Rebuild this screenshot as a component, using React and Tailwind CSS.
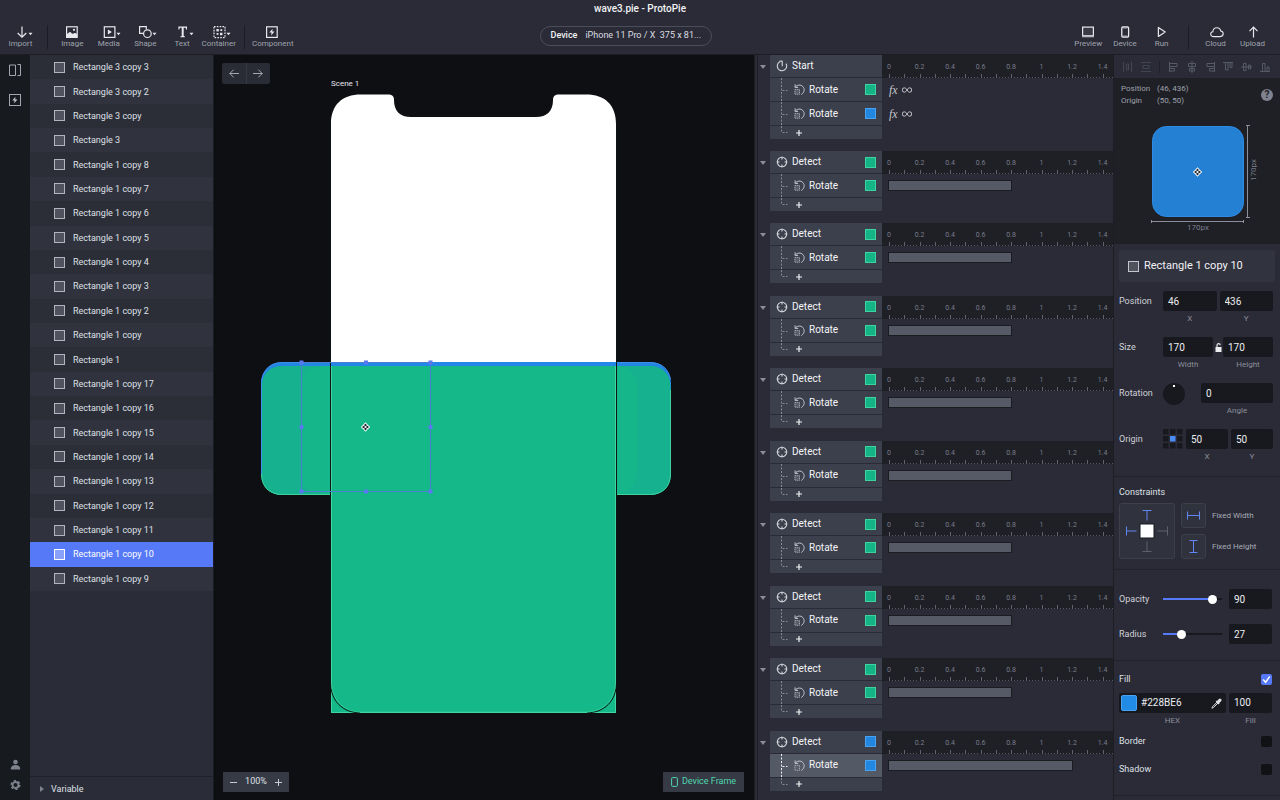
import React from "react";

const layers = [
  "Rectangle 3 copy 3",
  "Rectangle 3 copy 2",
  "Rectangle 3 copy",
  "Rectangle 3",
  "Rectangle 1 copy 8",
  "Rectangle 1 copy 7",
  "Rectangle 1 copy 6",
  "Rectangle 1 copy 5",
  "Rectangle 1 copy 4",
  "Rectangle 1 copy 3",
  "Rectangle 1 copy 2",
  "Rectangle 1 copy",
  "Rectangle 1",
  "Rectangle 1 copy 17",
  "Rectangle 1 copy 16",
  "Rectangle 1 copy 15",
  "Rectangle 1 copy 14",
  "Rectangle 1 copy 13",
  "Rectangle 1 copy 12",
  "Rectangle 1 copy 11",
  "Rectangle 1 copy 10",
  "Rectangle 1 copy 9",
];
const selectedLayer = "Rectangle 1 copy 10";

const detectGroups = [
  { color: "green", end: 0.8 },
  { color: "green", end: 0.8 },
  { color: "green", end: 0.8 },
  { color: "green", end: 0.8 },
  { color: "green", end: 0.8 },
  { color: "green", end: 0.8 },
  { color: "green", end: 0.8 },
  { color: "green", end: 0.8 },
  { color: "blue", end: 1.2, selected: true },
];

/* ---------- toolbar icons ---------- */

function Icon({ children, caret }) {
  return (
    <svg width="24" height="14" viewBox="0 0 24 14" fill="none" stroke="#e8e9ee" className="shrink-0">
      {children}
      {caret && <path d="M19.500 7.800h4l-2 2.400z" fill="#e8e9ee" stroke="none" />}
    </svg>
  );
}

const icons = {
  Import: (
    <Icon caret>
      <path d="M13 1.500v10.500M8.700 8l4.300 4.200L17.300 8" strokeWidth="1.200" />
    </Icon>
  ),
  Image: (
    <Icon>
      <rect x="6.600" y="1.800" width="10.600" height="10.600" strokeWidth="1.200" />
      <path d="M7 12V8.800c1.200 0 1.800-1.800 3-1.800s1.600 1.800 2.600 1.800 1.200-.8 2-.8 1 .6 2.400.8V12z" fill="#e8e9ee" stroke="none" />
      <circle cx="14" cy="4.800" r="1.100" fill="#e8e9ee" stroke="none" />
    </Icon>
  ),
  Media: (
    <Icon caret>
      <rect x="7.300" y="1.800" width="10.600" height="10.600" strokeWidth="1.200" />
      <path d="M10.900 4.600v5l4-2.500z" fill="#e8e9ee" stroke="none" />
    </Icon>
  ),
  Shape: (
    <Icon caret>
      <path d="M10.500 8.300H6.600V1.600h6.700v2.600" strokeWidth="1.200" />
      <circle cx="14.400" cy="8.700" r="3.800" strokeWidth="1.200" />
    </Icon>
  ),
  Text: (
    <Icon caret>
      <path
        d="M8.400 1.500h8.600v3h-.9l-.5-1.700h-1.900v8.200l1.300.4v.8h-4.600v-.8l1.300-.4V2.800H9.800l-.5 1.700h-.9z"
        fill="#e8e9ee"
        stroke="none"
      />
    </Icon>
  ),
  Container: (
    <Icon caret>
      <rect x="7" y="1.600" width="11" height="11" strokeWidth="1.200" strokeDasharray="1.600 1.200" />
      <rect x="9.400" y="4" width="2.400" height="2.400" fill="#e8e9ee" stroke="none" />
      <rect x="13.400" y="4.200" width="1.800" height="1.800" fill="#e8e9ee" stroke="none" />
      <rect x="9.600" y="8" width="1.800" height="1.800" fill="#e8e9ee" stroke="none" />
      <rect x="13" y="7.800" width="2.400" height="2.400" fill="#e8e9ee" stroke="none" />
    </Icon>
  ),
  Component: (
    <Icon>
      <rect x="5.600" y="1.800" width="10.600" height="10.600" strokeWidth="1.200" />
      <path d="M11.600 3.800 8.300 7.600h2.200l-.3 2.800 3.300-3.800h-2.200z" fill="#e8e9ee" stroke="none" />
    </Icon>
  ),
  Preview: (
    <Icon>
      <rect x="6.600" y="2.100" width="10.800" height="8.600" strokeWidth="1.200" fill="#3a3b46" />
      <path d="M6 11.400h12" strokeWidth="1.800" stroke="#b4b6bf" />
    </Icon>
  ),
  Device: (
    <Icon>
      <rect x="8.800" y="2" width="6.800" height="10" rx="1" strokeWidth="1.300" />
      <path d="M10 3h4.500M10 11h4.500" strokeWidth="1" stroke="#a4a6b0" />
    </Icon>
  ),
  Run: (
    <Icon>
      <path d="M8.400 2.400v9l6.800-4.500z" strokeWidth="1.200" strokeLinejoin="round" />
    </Icon>
  ),
  Cloud: (
    <Icon>
      <path
        d="M9.700 11.600c-1.900 0-3-1.100-3-2.500 0-1.300.9-2.300 2.200-2.400.1-2.400 1.900-4 4-4 2 0 3.500 1.400 3.800 3.300 1.500.2 2.500 1.200 2.500 2.600 0 1.700-1.200 3-3 3z"
        strokeWidth="1.100"
      />
    </Icon>
  ),
  Upload: (
    <Icon>
      <path d="M12.500 12.500V2.200M8.500 6.200l4-4 4 4" strokeWidth="1.200" />
    </Icon>
  ),
};

function Tool({ name }) {
  return (
    <button type="button" className="flex flex-col items-center pt-[7px]">
      {icons[name]}
      <span className="text-[8px] leading-[10px] text-[#9fa2ad]">{name}</span>
    </button>
  );
}

function ToolDivider() {
  return <span className="mt-[7px] h-6 w-px bg-[#1c1d24]" />;
}

function Header() {
  return (
    <header className="h-[55px] shrink-0 border-b border-[#1d1e25] bg-[#2a2b36]">
      <h1 className="h-[18px] text-center text-[10px] leading-[18px] font-medium text-[#f1f2f5]">
        wave3.pie - ProtoPie
      </h1>
      <div className="flex h-9">
        <div className="grid w-[41px]">
          <Tool name="Import" />
        </div>
        <div className="flex w-[13px] justify-center">
          <ToolDivider />
        </div>
        <div className="grid w-[183px] grid-cols-5">
          <Tool name="Image" />
          <Tool name="Media" />
          <Tool name="Shape" />
          <Tool name="Text" />
          <Tool name="Container" />
        </div>
        <div className="flex w-[15px] justify-center">
          <ToolDivider />
        </div>
        <div className="grid w-[39px]">
          <Tool name="Component" />
        </div>
        <div className="flex flex-1 items-start justify-center pt-2 pr-[110px]">
          <button
            type="button"
            className="flex h-5 w-[172px] items-center gap-2 rounded-full border border-[#4b4e5a] px-[10px] text-[9px] whitespace-nowrap text-[#dcdde3]"
          >
            <span className="font-medium text-[#f1f2f5]">Device</span>
            <span className="whitespace-pre">iPhone 11 Pro / X  375 x 81...</span>
          </button>
        </div>
        <div className="grid w-[110px] grid-cols-3">
          <Tool name="Preview" />
          <Tool name="Device" />
          <Tool name="Run" />
        </div>
        <div className="flex w-[17px] justify-center">
          <ToolDivider />
        </div>
        <div className="mr-[9px] grid w-[74px] grid-cols-2">
          <Tool name="Cloud" />
          <Tool name="Upload" />
        </div>
      </div>
    </header>
  );
}

/* ---------- left side ---------- */

function Rail() {
  return (
    <nav className="flex w-[30px] shrink-0 flex-col items-center justify-between bg-[#171a1f] pt-[9px] pb-[9px]">
      <div className="flex flex-col gap-[18px]">
        <button type="button" aria-label="Panels">
          <svg width="12" height="12" viewBox="0 0 12 12" fill="none" stroke="#a3a6ae">
            <path d="M.5 1h6v10.500h-6zM8.500.5h3v11h-3" />
          </svg>
        </button>
        <button type="button" aria-label="Components">
          <svg width="12" height="12" viewBox="0 0 12 12" fill="none" stroke="#a3a6ae">
            <rect x=".5" y=".5" width="11" height="11" />
            <path d="M6.400 2.800 3.300 6.400h2.100L5.200 9.200l3.300-3.700H6.300z" fill="#c0c2c9" stroke="none" />
          </svg>
        </button>
      </div>
      <div className="flex flex-col gap-2">
        <button type="button" aria-label="Account">
          <svg width="12" height="12" viewBox="0 0 12 12" fill="#7d828d">
            <circle cx="6.500" cy="3" r="2.300" />
            <path d="M1.700 10.400c0-2.900 2-4.300 4.800-4.300s4.800 1.400 4.800 4.300z" />
          </svg>
        </button>
        <button type="button" aria-label="Settings">
          <svg width="12" height="12" viewBox="0 0 12 12" fill="none" stroke="#7d828d">
            <circle cx="6.500" cy="6" r="3" strokeWidth="1.900" />
            <circle cx="6.500" cy="6" r="4.300" strokeWidth="1.500" strokeDasharray="2.250 2.250" />
          </svg>
        </button>
      </div>
    </nav>
  );
}

function Layers() {
  return (
    <aside className="flex w-[184px] shrink-0 flex-col justify-between border-r border-[#1a1c21] bg-[#2a2c37]">
      <ul className="grid h-[536px] auto-rows-fr">
        {layers.map((name, i) => {
          const on = name === selectedLayer;
          const bg = on ? "bg-[#5679f8]" : i % 2 ? "bg-[#30323d]" : "bg-[#2b2d37]";
          return (
            <li key={name} className={"flex " + bg}>
              <button type="button" className="flex flex-1 items-center gap-2 pl-6">
                <span
                  className={
                    "size-[11px] border " +
                    (on ? "border-white bg-[#8aa1fa]" : "border-[#b2b5bf] bg-[#50525d]")
                  }
                />
                <span className={"text-[9px] leading-3 " + (on ? "text-white" : "text-[#dfe0e6]")}>{name}</span>
              </button>
            </li>
          );
        })}
      </ul>
      <button type="button" className="flex h-6 items-center gap-[7px] border-t border-[#202229] pl-[10px]">
        <svg width="4" height="6" viewBox="0 0 4 6" fill="#7d828d">
          <path d="M0 0v6l4-3z" />
        </svg>
        <span className="text-[9px] leading-3 text-[#dfe0e6]">Variable</span>
      </button>
    </aside>
  );
}

/* ---------- canvas ---------- */

function OriginMark({ x, y }) {
  return (
    <g transform={`translate(${x} ${y})`}>
      <path
        d="M0-4.700 2.300-2.300 4.700 0 2.300 2.300 0 4.700-2.300 2.300-4.700 0-2.300-2.300z"
        fill="#fff"
      />
      <path
        d="M0-3.400 1.300-2 .6-.6 2-1.300 3.400 0 2 1.300.6.600 1.300 2 0 3.400-1.300 2-.6.600-2 1.300-3.400 0-2-1.300-.6-.6-1.300-2z"
        fill="#23252e"
      />
      <circle r="1" fill="#fff" />
    </g>
  );
}

function Scene() {
  return (
    <svg width="422" height="630" viewBox="255 90 422 630" fill="none">
      <path
        d="M331 124c0-19 11-29.500 30-29.500h27c4 0 6 1.500 6 5.500 0 11 6 17 17 17h125c11 0 17-6 17-17 0-4 2-5.500 6-5.500h27c19 0 30 10.500 30 29.500v240H331z"
        fill="#fff"
      />
      {/* wave rectangles that overflow the artboard */}
      <rect x="261" y="362" width="410" height="133" rx="21" fill="#2287e0" />
      <path d="M261.500 387c0-13 8-21 21-21h367c13 0 21 8 21 21v87c0 13-8 21-21 21h-367c-13 0-21-8-21-21z" fill="#16b28f" />
      <path d="M301 388c0-14 8-22 22-22h292c14 0 22 8 22 22v84c0 14-8 22-22 22H323c-14 0-22-8-22-22z" fill="#15b68a" />
      <path d="M261.500 474c0 13 8 20.500 21 20.500h367c13 0 21-7.500 21-20.500V390" stroke="#3fd39c" />
      <path d="M261.500 474V384c0-13 8-21.500 21-21.500h367c12 0 19 6 21 17" stroke="#3e8ff0" />
      {/* artboard body */}
      <path d="M331 366h285v347H331z" fill="#14b889" />
      <path d="M331 362h285v4H331z" fill="#2287e8" />
      <path d="M331.500 366v346.500h284V366" stroke="#40d6a2" />
      <path d="M330.500 124v558c0 19 12 31 31 31h224c19 0 31-12 31-31V124" stroke="#0c1512" />
      <path d="M332 686c1.500 16 13 26 30 26h223c17 0 28.500-10 30-26" stroke="#3fd39c" strokeWidth=".6" />
      <path d="M360 712.500h227" stroke="#40d6a2" />
      {/* selection */}
      <rect x="301.500" y="362.500" width="129" height="129" stroke="#4a7fd0" />
      <g fill="#5a78f2">
        <rect x="299.500" y="360.500" width="4" height="4" />
        <rect x="364" y="360.500" width="4" height="4" />
        <rect x="428.500" y="360.500" width="4" height="4" />
        <rect x="299.500" y="425" width="4" height="4" rx="1" />
        <rect x="428.500" y="425" width="4" height="4" rx="1" />
        <rect x="299.500" y="489.500" width="4" height="4" rx="1" />
        <rect x="364" y="489.500" width="4" height="4" rx="1" />
        <rect x="428.500" y="489.500" width="4" height="4" rx="1" />
      </g>
      <OriginMark x={365.5} y={427} />
    </svg>
  );
}

function Canvas() {
  return (
    <main className="relative min-w-0 flex-1 overflow-hidden bg-[#0e0f13]">
      <div className="flex flex-col pt-[23px] pl-[41px]">
        <p className="pl-[76px] text-[8px] leading-3 text-[#e4e5ea]">Scene 1</p>
        <Scene />
      </div>
      <div className="absolute top-2 left-2 flex h-[21px] w-12 rounded-[2px] bg-[#2a2c35]">
        <button type="button" aria-label="Back" className="flex flex-1 items-center justify-center border-r border-[#363844]">
          <svg width="10" height="9" viewBox="0 0 10 9" fill="none" stroke="#a3a6b0">
            <path d="M.8 4.500H10M4.600.7.800 4.500l3.800 3.800" />
          </svg>
        </button>
        <button type="button" aria-label="Forward" className="flex flex-1 items-center justify-center">
          <svg width="10" height="9" viewBox="0 0 10 9" fill="none" stroke="#a3a6b0">
            <path d="M0 4.500h9.200M5.400.7l3.800 3.800-3.800 3.800" />
          </svg>
        </button>
      </div>
      <div className="absolute bottom-2 left-[9px] flex h-5 w-[66px] items-center justify-between bg-[#363a45] px-[6px] text-[9px] text-[#dfe0e6]">
        <button type="button" aria-label="Zoom out">
          <svg width="9" height="9" viewBox="0 0 9 9" stroke="#c9cbd3">
            <path d="M1 4.500h7" />
          </svg>
        </button>
        <span>100%</span>
        <button type="button" aria-label="Zoom in">
          <svg width="9" height="9" viewBox="0 0 9 9" stroke="#c9cbd3">
            <path d="M1 4.500h7M4.500 1v7" />
          </svg>
        </button>
      </div>
      <button
        type="button"
        className="absolute right-[10px] bottom-2 flex h-5 w-[81px] items-center justify-center gap-1 bg-[#363a45] text-[9px] text-[#4fd6ae]"
      >
        <svg width="7" height="10" viewBox="0 0 7 10" fill="none" stroke="#4fd6ae">
          <rect x=".6" y=".6" width="5.800" height="8.800" rx="1" />
        </svg>
        Device Frame
      </button>
    </main>
  );
}

/* ---------- timeline ---------- */

const UNIT = 152.5;

function Ruler() {
  const minor = Array.from({ length: 75 }, (_, i) => i).filter((i) => i % 5 !== 0);
  const major = Array.from({ length: 15 }, (_, i) => i);
  const labels = ["0", "0.2", "0.4", "0.6", "0.8", "1", "1.2", "1.4"];
  return (
    <div className="h-[23px] bg-[#1e2026]">
      <svg width="231" height="23" viewBox="0 0 231 23" className="block">
        <g stroke="#5f6370" strokeWidth="1">
          {major.map((i) => (
            <path key={i} d={`M${Math.round(7 + (i * UNIT) / 10) + 0.5} 19v4`} />
          ))}
        </g>
        <g stroke="#565a66" strokeWidth="1">
          {minor.map((i) => (
            <path key={i} d={`M${Math.round(7 + (i * UNIT) / 50) + 0.5} 22v1`} />
          ))}
        </g>
        <g fill="#787c8a" fontSize="7" textAnchor="middle">
          {labels.map((t, i) => (
            <text key={t} x={7 + (i * UNIT) / 5} y="14">
              {t}
            </text>
          ))}
        </g>
      </svg>
    </div>
  );
}

function Swatch({ color }) {
  return (
    <span
      className={
        "mr-[6px] ml-auto size-[11px] border " +
        (color === "green" ? "border-[#3fd3a0] bg-[#14b487]" : "border-[#4aa2f0] bg-[#2287e0]")
      }
    />
  );
}

function Tree({ last, height, bright }) {
  const mid = last ? 6.5 : 12.5;
  return (
    <svg width="7" height={height} viewBox={`0 0 7 ${height}`} fill="none" stroke={bright ? "#f1f2f5" : "#878b97"} strokeDasharray="2 1.500">
      <path d={`M.5 0V${last ? mid : height}`} />
      <path d={`M1.500 ${mid}h5`} />
    </svg>
  );
}

function Rotate({ color, selected }) {
  return (
    <button
      type="button"
      className={"flex h-[23px] items-center pl-[11px] " + (selected ? "bg-[#545966]" : "bg-[#3c404c]")}
    >
      <Tree height={23} bright={selected} />
      <svg width="11" height="11" viewBox="0 0 11 11" fill="none" stroke="#c4c6ce" className="ml-[6px]">
        <rect x=".9" y="5.400" width="4.600" height="4.900" strokeWidth=".7" strokeDasharray="1.200 .6" fill="#5a5e6b" />
        <path d="M1.200 3.200C3 .8 6.600.2 8.800 2.500c2.300 2.500 1.500 6.200-1.500 8M1.100.4v3h3" strokeWidth="1" />
      </svg>
      <span className="ml-[4px] text-[10px] leading-3 text-[#f4f5f8]">Rotate</span>
      <Swatch color={color} />
    </button>
  );
}

function AddRow() {
  return (
    <button type="button" aria-label="Add response" className="flex h-[13px] items-center bg-[#3c404c] pl-[11px]">
      <Tree height={13} last />
      <svg width="6" height="6" viewBox="0 0 6 6" stroke="#f1f2f5" className="ml-2">
        <path d="M0 3h6M3 0v6" strokeWidth="1.200" />
      </svg>
    </button>
  );
}

function TriggerHead({ name, color }) {
  return (
    <button type="button" className="flex h-[22px] items-center bg-[#3c404c] pl-[6px]">
      <svg width="12" height="12" viewBox="0 0 12 12" fill="none" stroke="#d3d5dc" strokeWidth="1.100">
        {name === "Start" ? (
          <path d="M3.600 2A4.700 4.700 0 1 0 10 3.600M6.200.8v5.400M3.300 1.400 6.200 1" />
        ) : (
          <>
            <circle cx="6" cy="6" r="4.700" />
            <path d="M6 .8v2.700M6 8.500v2.700M.8 6h2.700M8.500 6h2.700" />
          </>
        )}
      </svg>
      <span className="ml-[4px] text-[10px] leading-3 text-[#f4f5f8]">{name}</span>
      {color && <Swatch color={color} />}
    </button>
  );
}

function Group({ name, color, responses, children }) {
  return (
    <section className="flex">
      <button type="button" aria-label={"Collapse " + name} className="flex w-3 items-start pt-[10px] pl-[2px]">
        <svg width="6" height="4" viewBox="0 0 6 4" fill="#8a8d98">
          <path d="M0 0h6L3 4z" />
        </svg>
      </button>
      <div className="flex w-[112px] flex-col gap-px">
        <TriggerHead name={name} color={color} />
        {responses}
        <AddRow />
      </div>
      <div className="flex flex-1 flex-col">
        <Ruler />
        {children}
      </div>
    </section>
  );
}

function Formula() {
  return (
    <p className="flex h-6 items-center gap-1 pl-[7px] leading-none text-[#c4c6ce]">
      <i className="font-['Liberation_Serif',serif] text-[12px]">fx</i>
      <svg width="10" height="6" viewBox="0 0 10 6" fill="none" stroke="#c4c6ce" role="img" aria-label="Infinite">
        <path d="M5 3C4 1.500 3.300.8 2.400.8a2.200 2.200 0 0 0 0 4.400C3.300 5.200 4 4.500 5 3s1.700-2.200 2.600-2.200a2.200 2.200 0 0 1 0 4.400C6.700 5.200 6 4.500 5 3z" />
      </svg>
    </p>
  );
}

function Timeline() {
  return (
    <section className="flex w-[360px] shrink-0 border-l border-[#1c1e24] bg-[#2a2b36]" aria-label="Interactions">
      <div className="w-[3px] border-r border-[#1f2027]" />
      <div className="flex min-w-0 flex-1 flex-col border-r border-[#1c1e24]">
        <div className="h-24 shrink-0">
          <Group
            name="Start"
            responses={
              <>
                <Rotate color="green" />
                <Rotate color="blue" />
              </>
            }
          >
            <Formula />
            <Formula />
          </Group>
        </div>
        <div className="grid h-[652px] shrink-0 auto-rows-fr">
          {detectGroups.map((g, i) => (
            <Group key={i} name="Detect" color={g.color} responses={<Rotate color={g.color} selected={g.selected} />}>
              <div className="flex h-[23px] items-center pl-[6px]">
                <div className="h-[11px] border border-[#1b1c22] bg-[#555a66]" style={{ width: g.end * UNIT + 2 }} />
              </div>
            </Group>
          ))}
        </div>
      </div>
    </section>
  );
}

/* ---------- inspector ---------- */

function Field({ id, label, value, className }) {
  return (
    <div className={"flex flex-col gap-[3px] " + className}>
      <input
        id={id}
        defaultValue={value}
        aria-label={label ? undefined : id}
        className="h-5 w-full rounded-[2px] bg-[#17191e] px-[5px] text-[10px] text-[#ecedf1] outline-none"
      />
      {label && (
        <label htmlFor={id} className="text-center text-[8px] leading-[10px] text-[#8c8f9b]">
          {label}
        </label>
      )}
    </div>
  );
}

function Name({ children }) {
  return <span className="w-[44px] shrink-0 text-[9px] leading-5 text-[#cfd1d8]">{children}</span>;
}

function AlignBar() {
  return (
    <div className="flex h-[23px] items-center bg-[#2a2b36] pl-2">
      <svg width="152" height="12" viewBox="0 0 152 12" fill="none" stroke="#565a67">
        <g stroke="#434650">
          <path d="M1.500 1v10M9.500 1v10M4.500 3h2v6h-2zM19 1.500h10M19 10.500h10M21 4.500h6v3h-6z" />
        </g>
        <path d="M37.500 0v12" stroke="#1f2027" />
        <path d="M47.500 1v10M48 2.500h7v3h-7M48 7.500h4.500v2.500H48" />
        <path d="M70 0v12M66.500 2.500h7v3h-7zM67.500 7.500h5v2.500h-5z" />
        <path d="M92.500 1v10M92 2.500h-7v3h7M92 7.500h-4.500v2.500H92" />
        <path d="M101 1.500h10M103.500 2v7h2.500V2M108 2v4.500h2V2" />
        <path d="M119 6h11M121.500 2.500h2.500v7h-2.500zM126.500 4h2v4h-2z" />
        <path d="M138 10.500h10M140.500 10V2.500h2.500V10M145 10V6h2v4" />
      </svg>
    </div>
  );
}

function Inspector() {
  return (
    <aside className="w-[166px] shrink-0 bg-[#2a2b36]">
      <AlignBar />
      <div className="h-[166px] bg-[#1e2026] pt-[5px]">
        <div className="flex justify-between pr-[7px] pl-[7px] text-[8px] leading-3 text-[#9ea1ac]">
          <dl className="grid grid-cols-[36px_auto]">
            <dt>Position</dt>
            <dd>(46, 436)</dd>
            <dt>Origin</dt>
            <dd>(50, 50)</dd>
          </dl>
          <button
            type="button"
            aria-label="Help"
            className="mt-[6px] size-3 rounded-full bg-[#7f838f] text-center text-[10px] leading-3 font-bold text-[#1e2026]"
          >
            ?
          </button>
        </div>
        <svg width="166" height="112" viewBox="1114 122 166 112" fill="none" className="mt-[15px] block">
          <rect x="1152.500" y="126.500" width="91" height="90" rx="14" fill="#2480d2" stroke="#2f8ce6" />
          <OriginMark x={1197.5} y={172} />
          <path d="M1247.500 126v91M1246 125.500h4M1246 217.500h4M1152 221.500h92M1151.500 220v3M1243.500 220v3" stroke="#8c8f9b" />
          <g fill="#7a7e8a" fontSize="8" textAnchor="middle">
            <text x="1198" y="230">170px</text>
            <text transform="translate(1256 170) rotate(-90)">170px</text>
          </g>
        </svg>
      </div>

      <div className="px-[5px] pt-[6px]">
        <div className="flex h-8 items-center gap-[5px] rounded-[2px] bg-[#31333e] pl-[9px] text-[11px] text-[#f1f2f5]">
          <span className="size-[11px] border border-[#c4c6ce] bg-[#50525d]" />
          Rectangle 1 copy 10
        </div>
      </div>

      <div className="flex flex-col gap-[13px] border-b border-[#202229] pt-[9px] pr-[7px] pb-[14px] pl-[5px]">
        <div className="flex">
          <Name>Position</Name>
          <div className="flex flex-1 gap-[3px]">
            <Field id="pos-x" label="X" value="46" className="flex-1 basis-0" />
            <Field id="pos-y" label="Y" value="436" className="flex-1 basis-0" />
          </div>
        </div>
        <div className="flex">
          <Name>Size</Name>
          <div className="flex flex-1">
            <Field id="width" label="Width" value="170" className="flex-1 basis-0" />
            <button type="button" aria-label="Keep ratio" className="flex h-5 w-[10px] items-center justify-center">
              <svg width="7" height="9" viewBox="0 0 7 9" fill="none">
                <path d="M2 4.500V2.400C2 1.300 2.700.6 3.600.6s1.600.7 1.600 1.600" stroke="#ecedf1" strokeWidth="1.100" />
                <rect x=".5" y="4" width="6" height="5" fill="#ecedf1" />
              </svg>
            </button>
            <Field id="height" label="Height" value="170" className="flex-1 basis-0" />
          </div>
        </div>
        <div className="flex">
          <Name>Rotation</Name>
          <div className="flex flex-1 gap-4">
            <span className="flex size-[22px] shrink-0 justify-center rounded-full bg-[#17191e] pt-[2px]">
              <span className="size-[2px] bg-white" />
            </span>
            <Field id="angle" label="Angle" value="0" className="flex-1" />
          </div>
        </div>
        <div className="flex">
          <Name>Origin</Name>
          <div className="flex flex-1 gap-[3px]">
            <svg width="20" height="20" viewBox="0 0 20 20" className="shrink-0">
              {[0, 1, 2].map((r) =>
                [0, 1, 2].map((c) => (
                  <rect
                    key={r * 3 + c}
                    x={c * 7}
                    y={r * 7}
                    width="5.500"
                    height="5.500"
                    fill={r === 1 && c === 1 ? "#4a8cf7" : "#17191e"}
                  />
                ))
              )}
            </svg>
            <Field id="origin-x" label="X" value="50" className="flex-1 basis-0" />
            <Field id="origin-y" label="Y" value="50" className="flex-1 basis-0" />
          </div>
        </div>
      </div>

      <div className="border-b border-[#202229] px-[5px] pt-[5px] pb-[10px]">
        <h2 className="text-[9px] leading-5 text-[#dfe0e6]">Constraints</h2>
        <div className="flex gap-[6px] pt-px">
          <button
            type="button"
            aria-label="Pin edges"
            className="flex size-14 items-center justify-center rounded-[3px] border border-[#3c404b] bg-[#30323d]"
          >
            <svg width="54" height="54" viewBox="0 0 54 54" fill="none" stroke="#5f626e">
              <rect x="20" y="20" width="14" height="14" fill="#fff" stroke="#17191e" />
              <path d="M22.500 6.500h9M27 6.500v10M6.500 22.500v9M6.500 27h10" stroke="#6187f5" />
              <path d="M22.500 47.500h9M27 47.500v-10M47.500 22.500v9M47.500 27h-10" />
            </svg>
          </button>
          <div className="flex flex-col justify-between">
            <button type="button" className="flex items-center gap-[6px] text-[8px] text-[#a9acb6]">
              <span className="flex size-[25px] items-center justify-center rounded-[3px] border border-[#3c404b] bg-[#30323d]">
                <svg width="13" height="13" viewBox="0 0 13 13" stroke="#6187f5">
                  <path d="M.5 2.500v8M12.500 2.500v8M.5 6.500h12" />
                </svg>
              </span>
              Fixed Width
            </button>
            <button type="button" className="flex items-center gap-[6px] text-[8px] text-[#a9acb6]">
              <span className="flex size-[25px] items-center justify-center rounded-[3px] border border-[#3c404b] bg-[#30323d]">
                <svg width="13" height="13" viewBox="0 0 13 13" stroke="#6187f5">
                  <path d="M2.500.5h8M2.500 12.500h8M6.500.5v12" />
                </svg>
              </span>
              Fixed Height
            </button>
          </div>
        </div>
      </div>

      <div className="flex flex-col gap-[15px] border-b border-[#202229] pt-[19px] pr-2 pb-4 pl-[5px]">
        <div className="flex items-center">
          <label htmlFor="opacity-range" className="w-[44px] text-[9px] leading-5 text-[#cfd1d8]">
            Opacity
          </label>
          <input
            id="opacity-range"
            type="range"
            defaultValue="90"
            className="mr-[7px] h-[2px] min-w-0 flex-1 appearance-none bg-[linear-gradient(90deg,#5679f8_84%,#17191e_84%)] [&::-webkit-slider-thumb]:size-[9px] [&::-webkit-slider-thumb]:appearance-none [&::-webkit-slider-thumb]:rounded-full [&::-webkit-slider-thumb]:bg-white"
          />
          <Field id="opacity" value="90" className="w-[43px]" />
        </div>
        <div className="flex items-center">
          <label htmlFor="radius-range" className="w-[44px] text-[9px] leading-5 text-[#cfd1d8]">
            Radius
          </label>
          <input
            id="radius-range"
            type="range"
            defaultValue="27"
            className="mr-[7px] h-[2px] min-w-0 flex-1 appearance-none bg-[linear-gradient(90deg,#5679f8_31%,#17191e_31%)] [&::-webkit-slider-thumb]:size-[9px] [&::-webkit-slider-thumb]:appearance-none [&::-webkit-slider-thumb]:rounded-full [&::-webkit-slider-thumb]:bg-white"
          />
          <Field id="radius" value="27" className="w-[43px]" />
        </div>
      </div>

      <div className="border-b border-[#202229] pt-2 pr-2 pb-4 pl-[5px] text-[9px] leading-5 text-[#dfe0e6]">
        <label className="flex h-5 items-center justify-between">
          Fill
          <span className="relative flex">
            <input type="checkbox" defaultChecked className="peer size-[11px] appearance-none rounded-[2px] bg-[#15171b] checked:bg-[#5679f8]" />
            <svg
              width="11"
              height="11"
              viewBox="0 0 11 11"
              fill="none"
              stroke="#fff"
              strokeWidth="1.500"
              className="pointer-events-none absolute inset-0 hidden peer-checked:block"
            >
              <path d="m2.200 5.600 2.400 2.600 4.200-5.800" />
            </svg>
          </span>
        </label>
        <div className="flex gap-[3px] pt-1">
          <div className="flex flex-1 flex-col gap-[3px]">
            <div className="flex h-5 items-center gap-1 rounded-[2px] bg-[#17191e] px-[2px]">
              <button type="button" aria-label="Fill colour" className="size-4 shrink-0 rounded-[2px] border border-[#4aa2f0] bg-[#228be6]" />
              <input id="hex" defaultValue="#228BE6" className="w-0 flex-1 bg-transparent text-[10px] text-[#ecedf1] outline-none" />
              <button type="button" aria-label="Pick colour" className="mr-[2px]">
                <svg width="11" height="11" viewBox="0 0 11 11" fill="none" stroke="#dfe0e6">
                  <path d="M6.200 4 1.600 8.600.9 10.200l1.600-.7L7.100 4.900" />
                  <path d="m5.200 3 2.900 2.900" strokeWidth="1.400" />
                  <path d="m7.200 4 1.800-1.900" strokeWidth="3" strokeLinecap="round" />
                </svg>
              </button>
            </div>
            <label htmlFor="hex" className="text-center text-[8px] leading-[10px] text-[#8c8f9b]">
              HEX
            </label>
          </div>
          <Field id="fill-amount" label="Fill" value="100" className="w-[43px]" />
        </div>
        <label className="mt-[5px] flex h-5 items-center justify-between">
          Border
          <input type="checkbox" className="size-[11px] appearance-none rounded-[2px] bg-[#111216]" />
        </label>
        <label className="mt-2 flex h-5 items-center justify-between">
          Shadow
          <input type="checkbox" className="size-[11px] appearance-none rounded-[2px] bg-[#111216]" />
        </label>
      </div>
    </aside>
  );
}

export default function App() {
  return (
    <div className="flex h-screen flex-col overflow-hidden bg-[#2a2b36] font-['Roboto',sans-serif]">
      <Header />
      <div className="flex min-h-0 flex-1 overflow-hidden">
        <Rail />
        <Layers />
        <Canvas />
        <Timeline />
        <Inspector />
      </div>
    </div>
  );
}
